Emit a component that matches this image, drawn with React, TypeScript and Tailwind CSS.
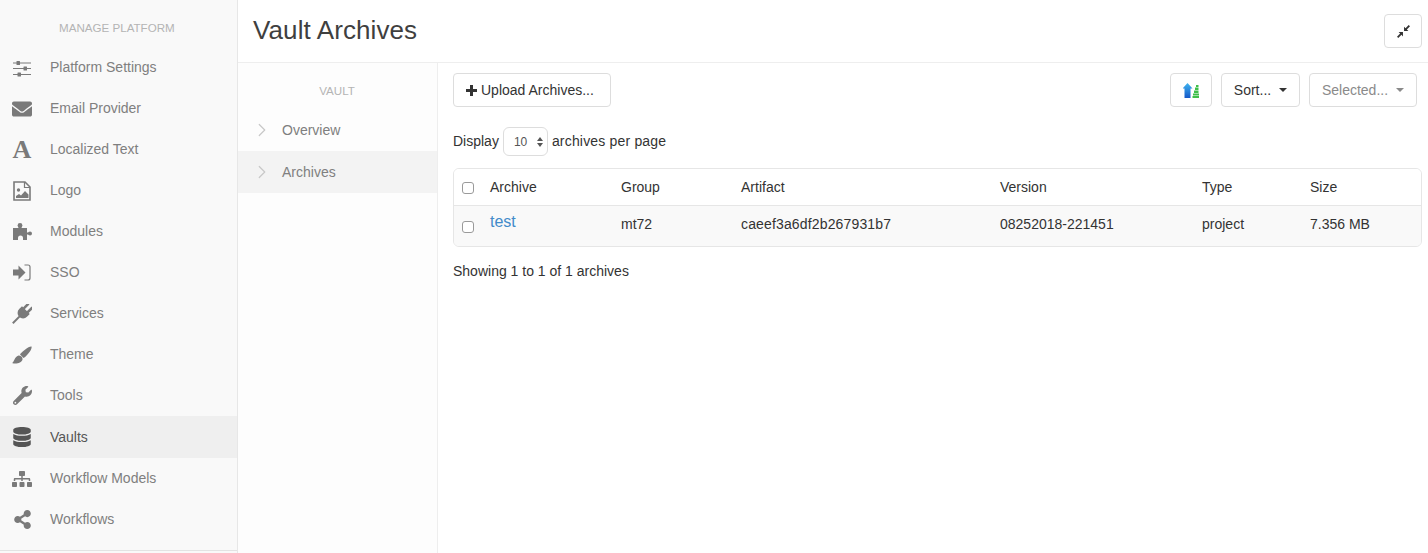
import React from 'react'
import { FaEnvelope, FaWrench, FaDatabase, FaSitemap, FaShareAlt } from 'react-icons/fa'
import { ChevronRight } from 'lucide-react'

const SlidersIcon = () => (
  <svg className="mt-[3px] h-[16px] w-[18px]" viewBox="0 0 18 16" fill="currentColor">
    <path d="M0 1.500h18v1H0zM0 7h18v1H0zM0 13h18v1H0z" />
    <rect x="3.500" y="0" width="3.500" height="4" rx="0.500" />
    <rect x="10.500" y="5.500" width="3.500" height="4" rx="0.500" />
    <rect x="4.500" y="11.500" width="3.500" height="4" rx="0.500" />
  </svg>
)

const FontIcon = () => (
  <span className="font-['Liberation_Serif',serif] text-[26px] leading-none font-bold">A</span>
)

const FileImageIcon = () => (
  <svg className="h-[20px] w-[18px]" viewBox="0 0 18 20" fill="currentColor">
    <path d="M1 1h11l5 5v13H1z" fill="none" stroke="currentColor" strokeWidth="1.600" />
    <path d="M11.500 1v5.500H17" fill="none" stroke="currentColor" strokeWidth="1.200" />
    <circle cx="5.500" cy="9" r="1.700" />
    <path d="M3 17v-2l3-2 2 1.500 4-4.500 3.500 3.500v3.500z" />
  </svg>
)

const PuzzleIcon = () => (
  <svg className="h-[17px] w-[19px]" viewBox="0 0 19 17" fill="currentColor">
    <path d="M0 5h14v12h-4v-2a2.500 2.500 0 0 0-5 0v2H0z" />
    <circle cx="7" cy="2.500" r="2.400" />
    <rect x="5.500" y="3" width="3" height="3" />
    <circle cx="17" cy="10.500" r="2" />
    <rect x="13" y="9.500" width="3" height="2" />
  </svg>
)

const SignInIcon = () => (
  <svg className="h-[17px] w-[18px]" viewBox="0 0 18 17" fill="currentColor">
    <path d="M0 5.500h5.500V1.500l7 7-7 7v-4H0z" />
    <path d="M11.500 1H15a2 2 0 0 1 2 2v11a2 2 0 0 1-2 2h-3.500" fill="none" stroke="currentColor" strokeWidth="1.200" />
  </svg>
)

const PlugIcon = () => (
  <svg className="h-[20px] w-[20px]" viewBox="0 0 20 20" fill="currentColor">
    <g transform="rotate(45 10 10)">
      <rect x="6" y="-2" width="2.500" height="7" />
      <rect x="11.500" y="-2" width="2.500" height="7" />
      <path d="M4.500 4.500h11v4a5.500 5.500 0 0 1-11 0z" />
      <rect x="9" y="13" width="2" height="10" />
    </g>
  </svg>
)

const BrushIcon = () => (
  <svg className="h-[18px] w-[20px]" viewBox="0 0 20 18" fill="currentColor">
    <path d="M19.500.5C20.500 3 15 10 11.500 12L8 8.500C10 5.500 17 0 19.500.5z" />
    <path d="M6.500 9.500C9 9.500 11 11.500 10.500 13.500 9.500 17 4 18.500 0 17c2.500-1 2-6 6.500-7.500z" />
  </svg>
)

const CompressIcon = () => (
  <svg className="h-[13px] w-[13px] text-[#333]" viewBox="0 0 12 12" fill="currentColor">
    <path d="M5.500 6.500v4l-1.400-1.400L1.200 12 0 10.800l2.900-2.900L1.500 6.500z" />
    <path d="M6.500 5.500v-4l1.400 1.400L10.800 0 12 1.200 9.100 4.100l1.400 1.400z" />
  </svg>
)

const PlusIcon = () => (
  <svg className="mr-[4px] h-[11px] w-[11px] text-[#333]" viewBox="0 0 11 11" fill="currentColor">
    <path d="M4 0h3v4h4v3H7v4H4V7H0V4h4z" />
  </svg>
)

const menu = [
  { label: 'Platform Settings', icon: SlidersIcon },
  { label: 'Email Provider', icon: () => <FaEnvelope className="h-[20px] w-[20px]" /> },
  { label: 'Localized Text', icon: FontIcon },
  { label: 'Logo', icon: FileImageIcon },
  { label: 'Modules', icon: PuzzleIcon },
  { label: 'SSO', icon: SignInIcon },
  { label: 'Services', icon: PlugIcon },
  { label: 'Theme', icon: BrushIcon },
  { label: 'Tools', icon: () => <FaWrench className="h-[19px] w-[19px]" /> },
  { label: 'Vaults', icon: () => <FaDatabase className="h-[20px] w-[20px]" />, active: true },
  { label: 'Workflow Models', icon: () => <FaSitemap className="h-[20px] w-[20px]" /> },
  { label: 'Workflows', icon: () => <FaShareAlt className="h-[19px] w-[19px]" /> },
]

const columns = ['Archive', 'Group', 'Artifact', 'Version', 'Type', 'Size']
const widths = ['w-[131px]', 'w-[120px]', 'w-[259px]', 'w-[202px]', 'w-[108px]', 'flex-1']
const row = ['test', 'mt72', 'caeef3a6df2b267931b7', '08252018-221451', 'project', '7.356 MB']

function Caret({ light }: { light?: boolean }) {
  return <span className={`ml-2 inline-block border-x-4 border-t-4 border-x-transparent ${light ? 'border-t-[#8a8a8a]' : 'border-t-[#333]'}`} />
}

function SortIcon() {
  return (
    <svg width="16" height="15" viewBox="0 0 16 15">
      <defs>
        <linearGradient id="blue" x1="0" y1="0" x2="0" y2="1">
          <stop offset="0" stopColor="#3fb4f0" />
          <stop offset="1" stopColor="#1558c8" />
        </linearGradient>
      </defs>
      <path d="M4.500 0L9.500 5.500H7.500V15H1.500V5.500H-.5z" fill="url(#blue)" />
      <path d="M13 2h2.500v2H13zM12 4.500h3.500v2.500H12zM11 7.500h4.500v2.500H11zM10 10.500h6V12.500H10zM9.500 13H16v2H9.500z" fill="#3fbf4a" />
    </svg>
  )
}

function Check() {
  return <input type="checkbox" className="h-[12px] w-[12px] appearance-none rounded-[3px] border border-[#9a9a9a] bg-white" />
}

export default function App() {
  return (
    <div className="flex h-[553px] w-[1428px] overflow-hidden bg-white font-['Liberation_Sans',sans-serif] text-[14px] text-[#333]">
      <aside className="h-full w-[238px] shrink-0 border-r border-[#e7e7e7] bg-[#f9f9f9]">
        <div className="h-[551px] border-b border-[#e3e3e3]">
          <div className="pt-[20px] pl-[59px] text-[11.6px] leading-[16px] text-[#b4b4b4]">MANAGE PLATFORM</div>
          <nav className="mt-[11px]">
            {menu.map(({ label, icon: Icon, active }) => (
              <div
                key={label}
                className={`flex items-center pl-[12px] ${active ? 'h-[42px] bg-[#efefef] text-[#555]' : 'h-[41px] text-[#7f7f7f]'}`}
              >
                <span className={`flex w-[20px] justify-center ${active ? 'text-[#555]' : 'text-[#7a7a7a]'}`}>
                  <Icon />
                </span>
                <span className="ml-[18px]">{label}</span>
              </div>
            ))}
          </nav>
        </div>
      </aside>

      <div className="flex min-w-0 flex-1 flex-col">
        <header className="flex h-[63px] shrink-0 items-center justify-between border-b border-[#eeeeee] pr-[6px] pl-[15px]">
          <h1 className="pb-[2px] text-[26px] leading-none font-normal tracking-[0.1px] text-[#3f3f3f]">Vault Archives</h1>
          <button className="flex h-[34px] w-[38px] items-center justify-center rounded border border-[#dddddd] bg-white">
            <CompressIcon />
          </button>
        </header>

        <div className="flex min-h-0 flex-1">
          <aside className="w-[200px] shrink-0 border-r border-[#eeeeee] bg-[#fdfdfd]">
            <div className="pt-[20px] pr-[1px] text-center text-[11.6px] leading-[16px] text-[#b4b4b4]">VAULT</div>
            <div className="mt-[10px]">
              {['Overview', 'Archives'].map((item) => (
                <div
                  key={item}
                  className={`flex h-[42px] items-center pl-[13px] text-[#7f7f7f] ${item === 'Archives' ? 'bg-[#f3f3f3]' : ''}`}
                >
                  <ChevronRight className="h-[22px] w-[22px] text-[#c8c8c8]" strokeWidth={1.3} />
                  <span className="ml-[9px]">{item}</span>
                </div>
              ))}
            </div>
          </aside>

          <main className="min-w-0 flex-1 pt-[10px] pr-[6px] pl-[15px]">
            <div className="flex items-center justify-between pr-[5px]">
              <button className="flex h-[34px] w-[158px] items-center rounded border border-[#dddddd] bg-white pl-[12px]">
                <PlusIcon />
                Upload Archives...
              </button>
              <div className="flex gap-[9px]">
                <button className="flex h-[34px] w-[42px] items-center justify-center rounded border border-[#dddddd] bg-white">
                  <SortIcon />
                </button>
                <button className="flex h-[34px] w-[79px] items-center justify-center rounded border border-[#dddddd] bg-white">
                  Sort...
                  <Caret />
                </button>
                <button className="flex h-[34px] w-[108px] items-center justify-center rounded border border-[#dddddd] bg-white text-[#8a8a8a]">
                  Selected...
                  <Caret light />
                </button>
              </div>
            </div>

            <div className="mt-[19px] flex h-[30px] items-center">
              Display
              <span className="mx-[4px] mt-[1px] flex h-[29px] w-[45px] items-center justify-between rounded-md border border-[#dddddd] pr-[4px] pl-[10px] text-[12px] text-[#555]">
                10
                <span className="flex flex-col gap-[2px]">
                  <span className="border-x-[3px] border-b-[4px] border-x-transparent border-b-[#555]" />
                  <span className="border-x-[3px] border-t-[4px] border-x-transparent border-t-[#555]" />
                </span>
              </span>
              <span className="tracking-[0.18px]">archives per page</span>
            </div>

            <div className="mt-[12px] overflow-hidden rounded-md border border-[#e6e6e6]">
              <div className="flex h-[37px] items-center border-b border-[#e6e6e6] bg-white">
                <span className="flex w-[36px] pt-[2px] pl-[8px]">
                  <Check />
                </span>
                {columns.map((c, i) => (
                  <span key={c} className={widths[i]}>{c}</span>
                ))}
              </div>
              <div className="flex h-[40px] items-center bg-[#f9f9f9] pb-[4px]">
                <span className="flex w-[36px] pt-[6px] pl-[8px]">
                  <Check />
                </span>
                {row.map((c, i) => (
                  <span
                    key={c}
                    className={`${widths[i]} ${i === 0 ? 'pb-[4px] text-[16px] text-[#428bca]' : ''} ${i === 2 ? 'tracking-[0.15px]' : ''}`}
                  >
                    {c}
                  </span>
                ))}
              </div>
            </div>

            <div className="mt-[14px] leading-[20px]">Showing 1 to 1 of 1 archives</div>
          </main>
        </div>
      </div>
    </div>
  )
}
